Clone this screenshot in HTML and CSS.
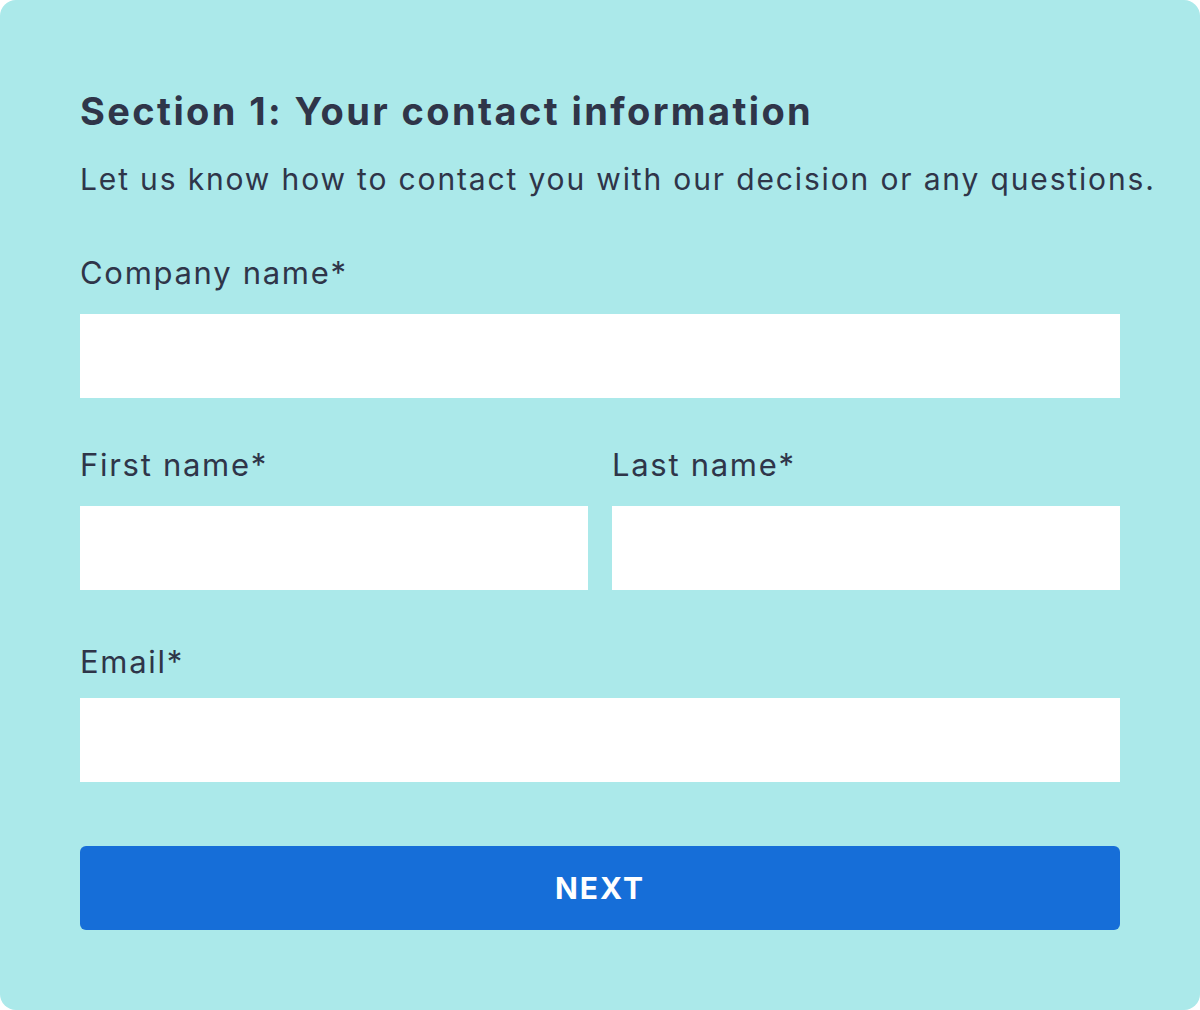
FILE: index.html
```html
<!DOCTYPE html>
<html lang="en">
<head>
<meta charset="utf-8">
<title>Section 1: Your contact information</title>
<link rel="stylesheet" href="styles.css">
</head>
<body>
<form class="card">
  <h1 class="title">Section 1: Your contact information</h1>
  <p class="intro">Let us know how to contact you with our decision or any questions.</p>

  <div class="field field-company">
    <label class="label" for="company">Company name*</label>
    <input class="input" id="company" type="text">
  </div>

  <div class="row">
    <div class="field">
      <label class="label" for="first">First name*</label>
      <input class="input" id="first" type="text">
    </div>
    <div class="field">
      <label class="label" for="last">Last name*</label>
      <input class="input" id="last" type="text">
    </div>
  </div>

  <div class="field field-email">
    <label class="label" for="email">Email*</label>
    <input class="input" id="email" type="email">
  </div>

  <button class="next" type="button">NEXT</button>
</form>
</body>
</html>
```
FILE: styles.css
```css
html, body {
  margin: 0;
  padding: 0;
  background: #ffffff;
}

body {
  font-family: Inter, "Open Sans", "Liberation Sans", sans-serif;
  color: #2f3549;
}

.card {
  box-sizing: border-box;
  width: 1200px;
  height: 1010px;
  padding: 88px 80px 0;
  background: #abe9ea;
  border-radius: 16px;
  display: flex;
  flex-direction: column;
}

.title {
  margin: 0;
  font-size: 38px;
  line-height: 46px;
  font-weight: 700;
  letter-spacing: 2.4px;
}

.intro {
  margin: 25px -60px 0 0;
  font-size: 30px;
  line-height: 40px;
  font-weight: 400;
  letter-spacing: 1.85px;
  white-space: nowrap;
}

.field {
  display: flex;
  flex-direction: column;
}

.label {
  font-size: 31px;
  line-height: 40px;
  font-weight: 400;
  letter-spacing: 1.7px;
  margin-bottom: 21px;
}

.field-company {
  margin-top: 54px;
}

.row {
  margin-top: 47px;
  display: grid;
  grid-template-columns: 1fr 1fr;
  gap: 24px;
}

.field-email {
  margin-top: 52px;
}

.field-email .label {
  margin-bottom: 16px;
}

.input {
  display: block;
  box-sizing: border-box;
  width: 100%;
  height: 84px;
  margin: 0;
  padding: 0 20px;
  border: 0;
  border-radius: 0;
  background: #ffffff;
  font: inherit;
  font-size: 28px;
  color: #2f3549;
  outline: none;
}

.next {
  margin-top: 64px;
  height: 84px;
  width: 100%;
  border: 0;
  border-radius: 6px;
  background: #166ed8;
  color: #ffffff;
  font-family: inherit;
  font-size: 30px;
  font-weight: 700;
  letter-spacing: 2px;
  cursor: pointer;
}
```
